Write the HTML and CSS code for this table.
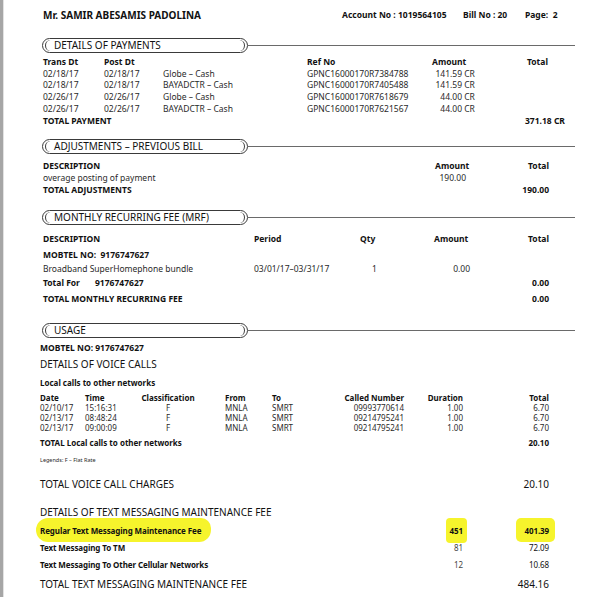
FILE: index.html
```html
<!DOCTYPE html>
<html>
<head>
<meta charset="utf-8">
<link rel="stylesheet" href="styles.css">
</head>
<body>
<div class="page">
  <div class="top">
    <div class="name">Mr. SAMIR ABESAMIS PADOLINA</div>
    <div>Account No : 1019564105</div>
    <div>Bill No : 20</div>
    <div>Page:&nbsp; 2</div>
  </div>

  <div class="sec-head s-pay"><div class="pill">DETAILS OF PAYMENTS</div><div class="rule"></div></div>
  <div class="pay">
    <div class="th">Trans Dt</div><div class="th">Post Dt</div><div></div><div class="th">Ref No</div><div class="th">Amount</div><div class="th">Total</div>
    <div>02/18/17</div><div>02/18/17</div><div>Globe – Cash</div><div>GPNC16000170R7384788</div><div><span class="num">141.59</span> CR</div><div></div>
    <div>02/18/17</div><div>02/18/17</div><div>BAYADCTR – Cash</div><div>GPNC16000170R7405488</div><div><span class="num">141.59</span> CR</div><div></div>
    <div>02/26/17</div><div>02/26/17</div><div>Globe – Cash</div><div>GPNC16000170R7618679</div><div><span class="num">44.00</span> CR</div><div></div>
    <div>02/26/17</div><div>02/26/17</div><div>BAYADCTR – Cash</div><div>GPNC16000170R7621567</div><div><span class="num">44.00</span> CR</div><div></div>
    <div class="th wide">TOTAL PAYMENT</div><div class="th tot">371.18 CR</div>
  </div>

  <div class="sec-head s-adj"><div class="pill">ADJUSTMENTS – PREVIOUS BILL</div><div class="rule"></div></div>
  <div class="adj">
    <div class="th">DESCRIPTION</div><div class="th amt-h">Amount</div><div class="th r">Total</div>
    <div>overage posting of payment</div><div class="r">190.00</div><div></div>
    <div class="th">TOTAL ADJUSTMENTS</div><div></div><div class="th r">190.00</div>
  </div>

  <div class="sec-head s-mrf"><div class="pill">MONTHLY RECURRING FEE (MRF)</div><div class="rule"></div></div>
  <div class="mrf">
    <div class="th">DESCRIPTION</div><div class="th">Period</div><div class="th">Qty</div><div class="th">Amount</div><div class="th r">Total</div>
    <div class="th full">MOBTEL NO:&nbsp; 9176747627</div>
    <div>Broadband SuperHomephone bundle</div><div>03/01/17–03/31/17</div><div class="qty">1</div><div class="amt-v">0.00</div><div></div>
    <div class="th"><span class="tf">Total For</span>9176747627</div><div></div><div></div><div></div><div class="th r">0.00</div>
    <div class="th last">TOTAL MONTHLY RECURRING FEE</div><div class="last"></div><div class="last"></div><div class="last"></div><div class="th r last">0.00</div>
  </div>

  <div class="sec-head s-use"><div class="pill">USAGE</div><div class="rule"></div></div>
  <div class="mob">MOBTEL NO: 9176747627</div>
  <div class="big voice">DETAILS OF VOICE CALLS</div>
  <div class="local">Local calls to other networks</div>
  <div class="calls">
    <div class="th">Date</div><div class="th">Time</div><div class="th c">Classification</div><div class="th fr">From</div><div class="th">To</div><div class="th r">Called Number</div><div class="th r">Duration</div><div class="th r">Total</div>
    <div>02/10/17</div><div>15:16:31</div><div class="c">F</div><div class="fr">MNLA</div><div>SMRT</div><div class="r">09993770614</div><div class="r">1.00</div><div class="r">6.70</div>
    <div>02/13/17</div><div>08:48:24</div><div class="c">F</div><div class="fr">MNLA</div><div>SMRT</div><div class="r">09214795241</div><div class="r">1.00</div><div class="r">6.70</div>
    <div>02/13/17</div><div>09:00:09</div><div class="c">F</div><div class="fr">MNLA</div><div>SMRT</div><div class="r">09214795241</div><div class="r">1.00</div><div class="r">6.70</div>
  </div>
  <div class="line-total"><span>TOTAL Local calls to other networks</span><span>20.10</span></div>
  <div class="legend">Legends: F – Flat Rate</div>
  <div class="big-row voice-total"><span>TOTAL VOICE CALL CHARGES</span><span>20.10</span></div>
  <div class="big text-head">DETAILS OF TEXT MESSAGING MAINTENANCE FEE</div>
  <div class="sms">
    <div><span class="hl hl-label">Regular Text Messaging Maintenance Fee</span></div><div class="r"><span class="hl hl-qty">451</span></div><div class="r"><span class="hl hl-tot">401.39</span></div>
    <div>Text Messaging To TM</div><div class="r qtyv">81</div><div class="r val">72.09</div>
    <div>Text Messaging To Other Cellular Networks</div><div class="r qtyv">12</div><div class="r val">10.68</div>
  </div>
  <div class="big-row text-total"><span>TOTAL TEXT MESSAGING MAINTENANCE FEE</span><span>484.16</span></div>
</div>
</body>
</html>
```

FILE: styles.css
```css
html, body {
  margin: 0;
  padding: 0;
  background: #fff;
}
body {
  font-family: "Noto Sans", "Open Sans", sans-serif;
  color: #2a2a2a;
  border-left: 3px solid #a6a6a6;
  box-shadow: inset 1px 0 0 #e2e2e2;
  min-height: 597px;
  box-sizing: border-box;
}
.page {
  padding: 9px 0 0 37px;
  width: 535px;
}
.th { font-weight: 700; color: #111; }
.r { text-align: right; }
.c { text-align: center; }

/* top line */
.top {
  display: grid;
  grid-template-columns: 299px 121px 62px auto;
  margin-left: 3px;
  font-size: 8.5px;
  font-weight: 700;
  line-height: 12px;
  color: #111;
}
.top .name { font-size: 10px; }

/* section headers */
.sec-head {
  display: flex;
  align-items: center;
  margin-left: 2px;
  width: 533px;
}
.pill {
  position: relative;
  width: 206px;
  height: 15px;
  box-sizing: border-box;
  border: 1px solid #3a3a3a;
  border-radius: 8px;
  padding-left: 11px;
  font-size: 10px;
  line-height: 13px;
  color: #111;
}
.pill::before {
  content: "";
  position: absolute;
  top: 1px;
  bottom: 1px;
  left: 2px;
  right: 2px;
  border-left: 1px solid #3a3a3a;
  border-right: 1px solid #3a3a3a;
  border-radius: 6px;
}
.rule {
  flex: 1;
  border-top: 1px solid #6a6a6a;
}
.s-pay { margin-top: 17px; }
.s-adj { margin-top: 13px; }
.s-mrf { margin-top: 14px; }
.s-use { margin-top: 17px; }

/* payments */
.pay {
  display: grid;
  grid-template-columns: 61px 59px 144px 125px 95px auto;
  margin: 3px 0 0 3px;
  font-size: 8.5px;
  line-height: 11.7px;
}
.pay .num { display: inline-block; width: 30px; text-align: right; }
.pay .wide { grid-column: 1 / 6; }
.pay .tot { margin-left: -2px; }

/* adjustments */
.adj {
  display: grid;
  grid-template-columns: 392px 31px 83px;
  margin: 6px 0 0 3px;
  font-size: 8.5px;
  line-height: 12px;
}
.adj .amt-h { text-align: left; }

/* mrf */
.mrf {
  display: grid;
  grid-template-columns: 211px 106px 74px 36px 79px;
  margin: 7px 0 0 3px;
  font-size: 8.5px;
  line-height: 14px;
}
.mrf .full { grid-column: 1 / 6; margin-top: 2px; }
.mrf .qty { padding-left: 12px; }
.mrf .amt-v { text-align: right; }
.mrf .tf { display: inline-block; width: 52px; }
.mrf .last { margin-top: 2px; }

/* usage */
.mob {
  margin-top: 4px;
  font-size: 8.5px;
  line-height: 12px;
  font-weight: 700;
  color: #111;
}
.big {
  font-size: 10px;
  line-height: 14px;
  color: #111;
}
.voice { margin-top: 3px; }
.local {
  margin-top: 6px;
  font-size: 8px;
  line-height: 12px;
  font-weight: 700;
  color: #111;
}
.calls {
  display: grid;
  grid-template-columns: 45px 56px 54px 77px 60px 72px 59px 86px;
  margin-top: 4px;
  font-size: 8px;
  line-height: 10px;
}
.calls .fr { padding-left: 30px; }
.line-total {
  display: flex;
  justify-content: space-between;
  width: 509px;
  margin-top: 4px;
  font-size: 8px;
  line-height: 12px;
  font-weight: 700;
  color: #111;
}
.legend {
  margin-top: 7px;
  font-size: 5.5px;
  line-height: 8px;
}
.big-row {
  display: flex;
  justify-content: space-between;
  width: 509px;
  font-size: 10px;
  line-height: 14px;
  color: #111;
}
.voice-total { margin-top: 13px; }
.text-head { margin-top: 14px; }
.sms {
  display: grid;
  grid-template-columns: 300px 123px 86px;
  margin-top: 3px;
  font-size: 8px;
  letter-spacing: -0.1px;
  line-height: 17px;
  font-weight: 700;
  color: #111;
}
.sms .qtyv { font-weight: 400; color: #444; }
.sms .val { font-weight: 400; color: #111; }
.hl {
  background: #f6f42c;
  border-radius: 9px;
  padding: 5px 6px;
}
.hl-label { margin-left: -4px; padding: 7px 10px 6px 4px; border-radius: 12px 10px 12px 12px; }
.hl-qty { padding: 7px 4px; margin-right: -4px; border-radius: 4px; }
.hl-tot { padding: 7px 6px 6px 8px; margin-right: -6px; border-radius: 5px; }
.text-total { margin-top: 4px; }
```
